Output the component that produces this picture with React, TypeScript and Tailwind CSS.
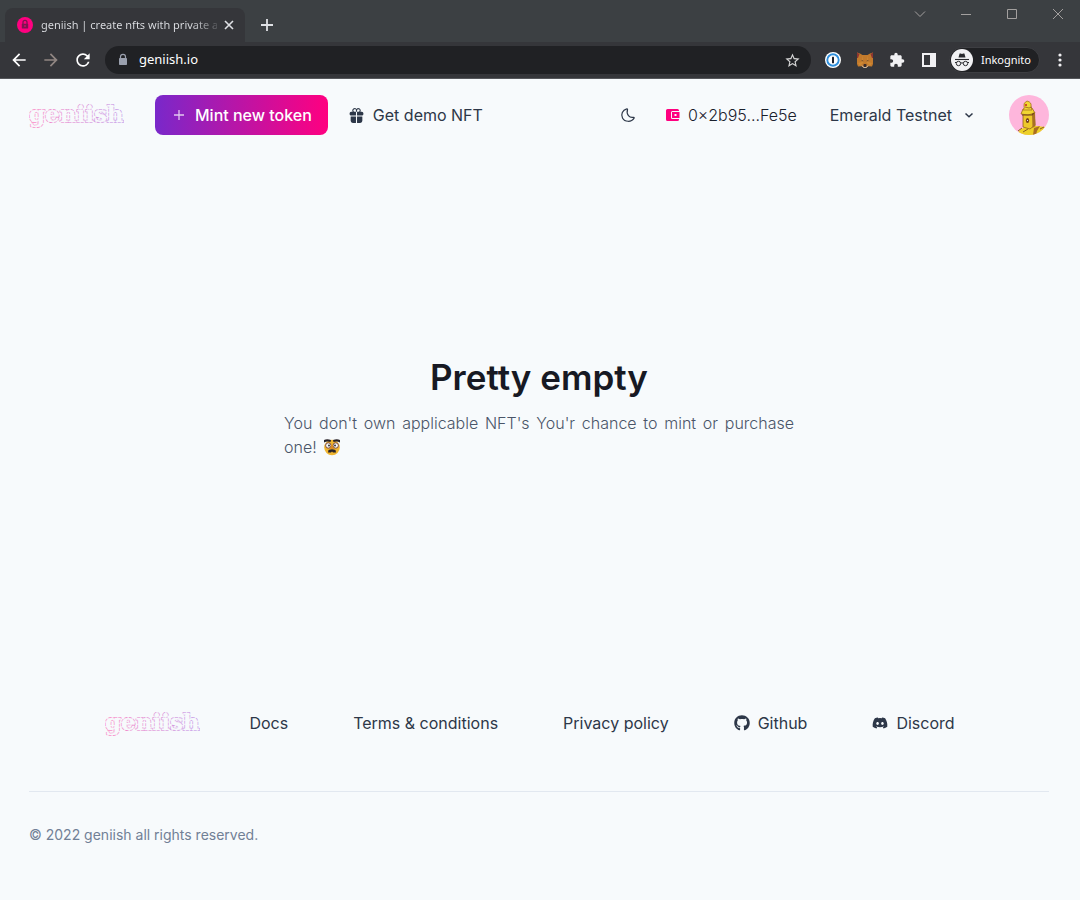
import React from "react";
import { FaGithub, FaDiscord } from "react-icons/fa";
import { IoGift } from "react-icons/io5";
import { MdExtension, MdStarBorder, MdRefresh, MdArrowBack, MdArrowForward } from "react-icons/md";

function Logo({ id }: { id: string }) {
  return (
    <a href="#home" aria-label="geniish" className="block shrink-0">
      <svg width="95" height="32" viewBox="0 0 95 32" aria-hidden="true" className="block">
        <defs>
          <linearGradient id={id} gradientUnits="userSpaceOnUse" x1="0" x2="95" y1="0" y2="0">
            <stop offset="0" stopColor="#ff1a90" />
            <stop offset="1" stopColor="#9340d4" />
          </linearGradient>
        </defs>
        <g fontFamily="DejaVu Serif, serif" fontWeight="700" fontSize="23" strokeLinejoin="round">
          <text x="0" y="23" fill="none" stroke={`url(#${id})`} strokeWidth="1.9" strokeOpacity=".5" strokeDasharray="3 1">geniish</text>
          <text x="0" y="23" fill="#f7fafc" stroke="#f7fafc" strokeWidth=".4">geniish</text>
        </g>
      </svg>
    </a>
  );
}

function OnePassword() {
  return (
    <svg width="16" height="16" viewBox="0 0 16 16">
      <circle cx="8" cy="8" r="8" fill="#fff" />
      <circle cx="8" cy="8" r="5.7" fill="#fff" stroke="#2f8fdc" strokeWidth="1.9" />
      <rect x="7" y="4.7" width="2" height="6.6" rx=".5" fill="#1a1f2b" />
    </svg>
  );
}

function Fox() {
  return (
    <svg width="16" height="16" viewBox="0 0 16 16">
      <path d="M0 .5 3 1.500 5.500 3h5L13 1.500 16 .5V12l-1 2.500-3.500-.2L9.500 15.500h-3l-2-1.200L1 14.500 0 12Z" fill="#c27a2c" />
      <path d="M0 .5 2.500 2 1 6H0ZM16 .5 13.500 2 15 6h1Z" fill="#8e3530" />
      <path d="m5 3 1.500 7.500L3 14 1 11l4-1ZM11 3l-1.500 7.500L13 14l2-3-4-1Z" fill="#cf8934" />
      <path d="M4 8.500 6 8l.4 1.800ZM12 8.500 10 8l-.4 1.800Z" fill="#7d552f" />
      <path d="m6.300 13 .7-1h2l.7 1L9 15H7Z" fill="#3a2d2c" />
      <path d="m5 13.500 1.500 2h3l1.500-2" fill="none" stroke="#c9b8a5" />
    </svg>
  );
}

function Incognito() {
  return (
    <svg width="22" height="22" viewBox="0 0 22 22">
      <circle cx="11" cy="11" r="11" fill="#f1f1f3" />
      <path d="M7.500 8.500 8.600 4.500h1.200l1.200.4 1.200-.4h1.200l1.100 4Z" fill="#292a2e" />
      <path d="M4 10.500h14" stroke="#292a2e" strokeWidth="1.100" />
      <g fill="none" stroke="#292a2e" strokeWidth="1">
        <circle cx="7.500" cy="14.500" r="2.200" />
        <circle cx="14.500" cy="14.500" r="2.200" />
        <path d="M9.700 14.200q1.300-.8 2.600 0M4 13.500h1.500M16.500 13.500H18" />
      </g>
    </svg>
  );
}

function Avatar() {
  return (
    <svg width="40" height="40" viewBox="0 0 40 40" className="block">
      <defs>
        <clipPath id="avatar-clip"><circle cx="20" cy="20" r="20" /></clipPath>
      </defs>
      <g clipPath="url(#avatar-clip)">
        <rect width="40" height="40" fill="#feb6dc" />
        <path d="M7 40 12 34 20 31 28 31 36 32 40 40Z" fill="#edd028" />
        <path d="M24 40 25 33 31 31 28 36 27 40Z" fill="#a96d22" />
        <path d="m9 36 4-3M14 37l5-3M31 34l4-2" stroke="#89601e" />
        <path d="M14 18 25 17 26 30 21 34 14 32Z" fill="#edc82b" stroke="#95611f" strokeWidth=".8" />
        <path d="m23 18 3-1 .5 14-3 2Z" fill="#a87124" />
        <path d="m12 19 2-5 9-1 3 5-7 2Z" fill="#f0d632" stroke="#9b671f" strokeWidth=".8" />
        <path d="M13 20h10l2-2" fill="none" stroke="#75451d" strokeWidth="1.200" />
        <path d="M14 15q2-2 1-4-1-3 3-5 5 1 4 6l1 3Z" fill="#f0d632" stroke="#a67524" strokeWidth=".8" />
        <path d="m16 12 4 1 3-1" fill="none" stroke="#a67524" />
        <rect x="16" y="9" width="2" height="2" fill="#d44e26" />
        <ellipse cx="18.500" cy="25.500" rx="1.700" ry="2.500" fill="#784420" />
        <path d="m18 25 1 1" stroke="#dbe3ec" />
      </g>
    </svg>
  );
}

function DisguisedFace() {
  return (
    <svg width="18" height="18" viewBox="0 0 18 18" role="img" aria-label="Disguised face" className="ml-[2px] inline-block align-[-3px]">
      <circle cx="9" cy="9.500" r="7.800" fill="#f0b52f" />
      <circle cx="5.300" cy="7.500" r="2.700" fill="#f6f6f6" stroke="#713c35" strokeWidth=".9" />
      <circle cx="12.700" cy="7.500" r="2.700" fill="#f6f6f6" stroke="#713c35" strokeWidth=".9" />
      <circle cx="6" cy="7.500" r="1" fill="#333" />
      <circle cx="12" cy="7.500" r="1" fill="#333" />
      <path d="M1 4.500V2Q4 .5 8 2l-.5 2Q4 3 1 4.500ZM17 4.500V2Q14 .5 10 2l.5 2Q14 3 17 4.500Z" fill="#282228" />
      <path d="M8.200 7h1.600l1.200 4H7Z" fill="#d88b25" />
      <path d="M5.500 12q3.500-1.500 7 0l.5 2.500H10l-1-1-1 1H5Z" fill="#282228" />
    </svg>
  );
}

function BrowserChrome() {
  return (
    <div className="font-['Noto_Sans','Open_Sans',sans-serif] text-white">
      <div className="flex h-[42px] items-start bg-[#3c4043]">
        <div className="ml-[5px] mt-2 flex h-[34px] w-60 items-center rounded-t-lg bg-[#35363a] pl-3 pr-2">
          <svg width="16" height="16" viewBox="0 0 16 16" className="shrink-0">
            <circle cx="8" cy="8" r="8" fill="#ff0080" />
            <path d="M6 7V5.300a2 2 0 0 1 4 0V7" fill="none" stroke="#7d1450" strokeWidth="1.300" />
            <rect x="4.800" y="6.800" width="6.400" height="4.700" rx=".6" fill="#7d1450" />
            <circle cx="8" cy="9" r=".8" fill="#ff0080" />
          </svg>
          <span className="ml-2 w-[176px] shrink-0 whitespace-nowrap bg-linear-to-r from-[#dfe1e5] from-85% to-[#dfe1e5]/20 bg-clip-text text-[11px] text-transparent">
            geniish | create nfts with private a
          </span>
          <button aria-label="Close tab" className="ml-1 flex size-4 items-center justify-center">
            <svg width="10" height="10" viewBox="0 0 10 10"><path d="m1 1 8 8M9 1 1 9" stroke="#dfe1e5" strokeWidth="1.600" /></svg>
          </button>
        </div>
        <button aria-label="New tab" className="ml-4 mt-[19px]">
          <svg width="12" height="12" viewBox="0 0 12 12" className="block"><path d="M6 0v12M0 6h12" stroke="#dfe1e5" strokeWidth="1.800" /></svg>
        </button>
        <div className="ml-auto mr-4 mt-2 flex gap-[34px] text-[#a3a09f]">
          <button aria-label="Search tabs"><svg width="12" height="12" viewBox="0 0 12 12" className="block"><path d="m1 3.500 5 5 5-5" fill="none" stroke="currentColor" /></svg></button>
          <button aria-label="Minimize"><svg width="12" height="12" viewBox="0 0 12 12" className="block"><path d="M1 6.500h10" stroke="currentColor" /></svg></button>
          <button aria-label="Maximize"><svg width="12" height="12" viewBox="0 0 12 12" className="block"><path d="M1.500 1.500h9v9h-9z" fill="none" stroke="currentColor" /></svg></button>
          <button aria-label="Close window"><svg width="12" height="12" viewBox="0 0 12 12" className="block"><path d="m1 1 10 10M11 1 1 11" stroke="currentColor" /></svg></button>
        </div>
      </div>
      <div className="flex h-[37px] items-center border-b border-[#55575b] bg-[#35363a] pl-[9px] pr-3">
        <button aria-label="Back"><MdArrowBack size={20} /></button>
        <button aria-label="Forward" className="ml-3 text-[#918783]"><MdArrowForward size={20} /></button>
        <button aria-label="Reload" className="ml-3"><MdRefresh size={20} /></button>
        <div className="ml-3 flex h-7 flex-1 items-center rounded-full bg-[#202124] pl-3 pr-[10px]">
          <svg width="12" height="14" viewBox="0 0 12 14">
            <path d="M3.500 6V3.800a2.500 2.500 0 0 1 5 0V6" fill="none" stroke="#9aa0ae" strokeWidth="1.200" />
            <rect x="2" y="5" width="8" height="7" rx=".8" fill="#9aa0ae" />
          </svg>
          <input aria-label="Address" defaultValue="geniish.io" className="ml-[10px] min-w-0 flex-1 bg-transparent text-[13px] outline-none" />
          <button aria-label="Bookmark this page" className="text-[#d5d5d5]"><MdStarBorder size={17} /></button>
        </div>
        <div className="ml-[14px] flex items-center gap-4">
          <button aria-label="Password manager"><OnePassword /></button>
          <button aria-label="Wallet extension"><Fox /></button>
          <button aria-label="Extensions" className="text-[#f1f1f3]"><MdExtension size={16} /></button>
          <button aria-label="Side panel">
            <svg width="16" height="16" viewBox="0 0 16 16"><path fillRule="evenodd" d="M1 1h14v14H1ZM3 3v10h6V3Z" fill="#f1f1f3" /></svg>
          </button>
        </div>
        <button className="ml-3 flex h-[26px] items-center rounded-full border border-[#3d3e42] bg-[#202124] pl-px pr-2 text-[11px]">
          <Incognito />
          <span className="ml-2">Inkognito</span>
        </button>
        <button aria-label="Menu" className="ml-[14px]">
          <svg width="14" height="16" viewBox="0 0 14 16"><g fill="#f1f1f3"><circle cx="6" cy="3" r="1.600" /><circle cx="6" cy="8" r="1.600" /><circle cx="6" cy="13" r="1.600" /></g></svg>
        </button>
      </div>
    </div>
  );
}

function Header() {
  return (
    <header className="flex items-center py-4 pl-[29px] pr-[31px]">
      <Logo id="logo-header" />
      <button className="ml-[31px] flex h-10 items-center gap-[10px] rounded-lg bg-linear-to-r/srgb from-[#7928ca] to-[#ff0080] pl-[18px] pr-4 font-medium text-white">
        <svg width="12" height="12" viewBox="0 0 12 12"><path d="M6 1v10M1 6h10" stroke="#fff" strokeOpacity=".75" strokeWidth="1.300" /></svg>
        Mint new token
      </button>
      <button className="ml-5 flex items-center gap-2">
        <IoGift size={17} />
        Get demo NFT
      </button>
      <div className="ml-auto flex items-center">
        <button aria-label="Switch to dark mode">
          <svg width="16" height="16" viewBox="0 0 16 16" className="block"><path d="M6.700 1.800C2.500 3 .6 7.300 2.500 11c2.200 4.200 8.900 4.500 11.600.1.300-.5-.2-.9-.7-.8C9.500 11.100 6 7.500 7.500 2.500c.1-.5-.3-.9-.8-.7Z" fill="none" stroke="currentColor" strokeWidth="1.200" /></svg>
        </button>
        <button className="ml-[30px] flex items-center gap-2 font-light text-[#1a202c]">
          <svg width="14" height="14" viewBox="0 0 14 14">
            <path d="M1.500 1h10A1.500 1.500 0 0 1 13 2.500V3H6.500A1.500 1.500 0 0 0 5 4.500v5A1.500 1.500 0 0 0 6.500 11H13v.5a1.500 1.500 0 0 1-1.500 1.500h-10A1.500 1.500 0 0 1 0 11.500v-9A1.500 1.500 0 0 1 1.500 1Z" fill="#ff0080" />
            <path fillRule="evenodd" d="M6 4h7.500v6H6ZM8.500 6v2h2V6Z" fill="#ff0080" />
          </svg>
          0×2b95...Fe5e
        </button>
        <button className="ml-[33px] flex items-center gap-[11px]">
          Emerald Testnet
          <svg width="12" height="12" viewBox="0 0 12 12"><path d="m2.500 4.500 3.500 3.300 3.500-3.300" fill="none" stroke="currentColor" strokeWidth="1.500" /></svg>
        </button>
        <button aria-label="Account" className="ml-[34px]"><Avatar /></button>
      </div>
    </header>
  );
}

function Footer() {
  return (
    <footer className="pl-[29px] pr-[31px]">
      <nav className="flex items-center justify-center gap-[33px] pb-[52px] pr-[2px]">
        <Logo id="logo-footer" />
        <a href="#docs" className="px-4">Docs</a>
        <a href="#terms" className="px-4">Terms &amp; conditions</a>
        <a href="#privacy" className="px-4">Privacy policy</a>
        <a href="#github" className="flex items-center gap-2 px-4"><FaGithub size={16} />Github</a>
        <a href="#discord" className="flex items-center gap-2 px-4"><FaDiscord size={16} />Discord</a>
      </nav>
      <p className="border-t border-[#e2e8f0] pb-[55px] pt-[33px] text-sm text-[#718096]">© 2022 geniish all rights reserved.</p>
    </footer>
  );
}

export default function App() {
  return (
    <div className="flex min-h-screen flex-col bg-[#f7fafc] font-['Inter',sans-serif] text-base text-[#2d3748]">
      <BrowserChrome />
      <Header />
      <main className="flex flex-1 flex-col items-center justify-center pb-[45px] pr-[2px]">
        <div className="w-full max-w-[510px]">
          <h1 className="text-center text-[35px] font-semibold leading-[44px] text-[#171923]">Pretty empty</h1>
          <p className="mt-3 text-justify font-light leading-6 text-[#4a5568]">
            You don't own applicable NFT's You'r chance to mint or purchase one! <DisguisedFace />
          </p>
        </div>
      </main>
      <Footer />
    </div>
  );
}
